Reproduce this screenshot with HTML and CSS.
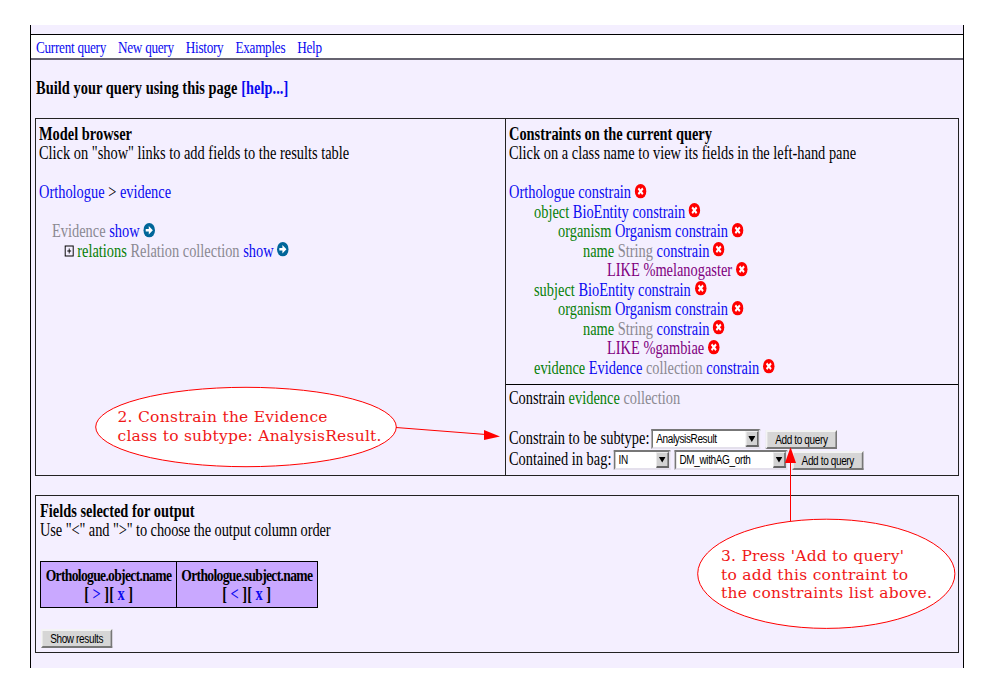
FILE: index.html
```html
<!DOCTYPE html>
<html lang="en">
<head>
<meta charset="utf-8">
<title>Query builder</title>
<link rel="stylesheet" href="styles.css">
</head>
<body>
<svg class="defs" width="0" height="0">
  <symbol id="remove" viewBox="0 0 14 14"><circle cx="7" cy="7" r="7" fill="#f00"/><path d="M4.3 4.3 9.7 9.7M9.7 4.3 4.3 9.7" stroke="#fff" stroke-width="2.3"/></symbol>
  <symbol id="go" viewBox="0 0 14 14"><circle cx="7" cy="7" r="7" fill="#069"/><path d="M2.8 5.7H6.5V2.9L11.4 7 6.5 11.1V8.3H2.8Z" fill="#fff"/></symbol>
  <symbol id="plus" viewBox="0 0 12 12"><path d="M1 1H11V11H1Z" fill="none" stroke="#000" stroke-width="1.2"/><path d="M3.6 6H8.4M6 3.6V8.4" stroke="#000" stroke-width="1.1"/></symbol>
</svg>
<div class="page">
  <nav class="nav"><div class="row"><a>Current query</a><a>New query</a><a>History</a><a>Examples</a><a>Help</a></div></nav>
  <h1 class="row heading">Build your query using this page <a>[help...]</a></h1>

  <div class="panes">
    <section class="browser">
      <h2 class="row">Model browser</h2>
      <p class="row">Click on "show" links to add fields to the results table</p>
      <p class="row gap"><a>Orthologue</a> &gt; <a>evidence</a></p>
      <p class="row gap in1"><span class="type">Evidence</span> <a>show</a> <svg class="icon"><use href="#go"/></svg></p>
      <p class="row in2"><svg class="icon plus"><use href="#plus"/></svg> <span class="field">relations</span> <span class="type">Relation collection</span> <a>show</a> <svg class="icon"><use href="#go"/></svg></p>
    </section>
    <div class="right">
      <section class="constraints">
        <h2 class="row">Constraints on the current query</h2>
        <p class="row">Click on a class name to view its fields in the left-hand pane</p>
        <p class="row gap"><a>Orthologue</a> <a>constrain</a> <svg class="icon"><use href="#remove"/></svg></p>
        <p class="row d1"><span class="field">object</span> <a>BioEntity</a> <a>constrain</a> <svg class="icon"><use href="#remove"/></svg></p>
        <p class="row d2"><span class="field">organism</span> <a>Organism</a> <a>constrain</a> <svg class="icon"><use href="#remove"/></svg></p>
        <p class="row d3"><span class="field">name</span> <span class="type">String</span> <a>constrain</a> <svg class="icon"><use href="#remove"/></svg></p>
        <p class="row d4"><span class="value">LIKE %melanogaster</span> <svg class="icon"><use href="#remove"/></svg></p>
        <p class="row d1"><span class="field">subject</span> <a>BioEntity</a> <a>constrain</a> <svg class="icon"><use href="#remove"/></svg></p>
        <p class="row d2"><span class="field">organism</span> <a>Organism</a> <a>constrain</a> <svg class="icon"><use href="#remove"/></svg></p>
        <p class="row d3"><span class="field">name</span> <span class="type">String</span> <a>constrain</a> <svg class="icon"><use href="#remove"/></svg></p>
        <p class="row d4"><span class="value">LIKE %gambiae</span> <svg class="icon"><use href="#remove"/></svg></p>
        <p class="row d1"><span class="field">evidence</span> <a>Evidence</a> <span class="type">collection</span> <a>constrain</a> <svg class="icon"><use href="#remove"/></svg></p>
      </section>
      <section class="editor">
        <p class="row">Constrain <span class="field">evidence</span> <span class="type">collection</span></p>
        <div class="row form first"><span class="label subtype">Constrain to be subtype:</span><span class="select s1">AnalysisResult<i class="drop"></i></span><span class="button">Add to query</span></div>
        <div class="row form"><span class="label bag">Contained in bag:</span><span class="select s2">IN<i class="drop"></i></span><span class="select s3">DM_withAG_orth<i class="drop"></i></span><span class="button">Add to query</span></div>
      </section>
    </div>
  </div>

  <section class="output">
    <h2 class="row">Fields selected for output</h2>
    <p class="row order">Use "&lt;" and "&gt;" to choose the output column order</p>
    <div class="columns">
      <div class="column c1"><span class="name">Orthologue.object.name</span><span class="links">[ <a>&gt;</a> ][ <a>x</a> ]</span></div>
      <div class="column c2"><span class="name">Orthologue.subject.name</span><span class="links">[ <a>&lt;</a> ][ <a>x</a> ]</span></div>
    </div>
    <div class="row form results"><span class="button">Show results</span></div>
  </section>
</div>

<svg class="notes" width="994" height="688" viewBox="0 0 994 688">
  <g class="shape">
    <ellipse cx="246" cy="427" rx="150.3" ry="39.7"/>
    <path d="M396 427.5 486 434.5"/>
    <ellipse cx="826.3" cy="573.8" rx="128.6" ry="54.6"/>
    <path d="M790.5 521V460"/>
  </g>
  <path class="head" d="M484 430 500 436.500 484 440ZM785 463 790.5 447 796 463Z"/>
  <g class="note">
    <text x="117.500" y="421.500" textLength="210">2. Constrain the Evidence</text>
    <text x="117.500" y="440.500" textLength="264">class to subtype: AnalysisResult.</text>
    <text x="721" y="560.500" textLength="183">3. Press 'Add to query'</text>
    <text x="721" y="579.500" textLength="187">to add this contraint to</text>
    <text x="721" y="597.500" textLength="211">the constraints list above.</text>
  </g>
</svg>
</body>
</html>
```

FILE: styles.css
```css
* { box-sizing: border-box; }
body {
  margin: 0;
  width: 994px;
  height: 688px;
  position: relative;
  overflow: hidden;
  padding: 25px 0 0 30px;
  background: #fff;
  color: #000;
  font: 18px/19.5px "Liberation Serif", serif;
}
.defs { position: absolute; }
h1, h2, p { margin: 0; font-size: inherit; font-weight: normal; }
h1, h2 { font-weight: bold; }
a { color: #0a0af0; }
.page {
  width: 934px;
  height: 643px;
  background: #f4efff;
  border: solid #000;
  border-width: 0 1px;
  padding-top: 9px;
}
/* Condensed text line */
.row {
  width: max-content;
  transform: scaleX(.8);
  transform-origin: 0 0;
  white-space: nowrap;
  height: 19.5px;
}
.nav {
  height: 26px;
  background: #fff;
  border-top: 1px solid #000;
  border-bottom: 2px solid #666370;
  padding: 3px 0 0 5px;
  font-size: 16.5px;
}
.nav .row { display: flex; gap: 15px; letter-spacing: -.35px; }
.heading { margin: 19px 0 0 5px; letter-spacing: .05px; }
.panes {
  display: grid;
  grid-template-columns: 470px 1fr;
  width: 924px;
  height: 358px;
  margin: 19.5px 0 0 4px;
  border: 1px solid #222;
}
.browser { padding: 5.5px 0 0 3px; border-right: 1px solid #222; }
.right { display: grid; grid-template-rows: 266px 1fr; }
.constraints { padding: 5.5px 0 0 3px; border-bottom: 1px solid #000; }
.editor { padding: 4px 0 0 3px; }
.gap { margin-top: 19.5px; }
.in1 { margin-left: 12.5px; }
.in2 { margin-left: 24.5px; }
.d1 { margin-left: 24.5px; }
.d2 { margin-left: 49px; }
.d3 { margin-left: 73.5px; }
.d4 { margin-left: 98px; }
.field { color: #088008; }
.type { color: #8b8992; }
.value { color: #800080; }
.icon { width: 15px; height: 14.5px; overflow: visible; }
.plus { width: 13px; height: 12px; margin-right: -1px; }

.form { display: flex; height: 20.5px; }
.first { margin-top: 20.5px; }
.label { line-height: 19px; }
.subtype { width: 178px; }
.bag { width: 131px; }
.select, .button { font: 12.5px/16px "Liberation Sans", sans-serif; letter-spacing: -.45px; }
.select {
  display: flex;
  justify-content: space-between;
  height: 20px;
  background: #fff;
  border: 2px solid;
  border-color: #777 #e4e0ec #e4e0ec #777;
  padding-left: 4px;
}
.s1 { width: 136px; margin-right: 7px; }
.s2 { width: 71px; margin-right: 5px; }
.s3 { width: 141px; margin-right: 6px; }
.drop {
  width: 16px;
  height: 16px;
  background: #d2d2d2;
  border: 1px solid;
  border-color: #eee #666 #666 #eee;
  border-width: 1px 2px 2px 1px;
  padding: 4px 0 0 2px;
}
.drop::before {
  content: "";
  display: block;
  width: 9px;
  height: 6px;
  background: #000;
  clip-path: polygon(0 0, 100% 0, 50% 100%);
}
.button {
  width: 89px;
  height: 19px;
  margin-top: 1px;
  background: #d6d6d6;
  border: 2px solid;
  border-color: #f4f4f4 #777 #777 #f4f4f4;
  text-align: center;
}
.output {
  width: 924px;
  height: 158px;
  margin: 19px 0 0 4px;
  padding: 5.5px 0 0 4px;
  border: 1px solid #222;
}
.order { letter-spacing: -.1px; }
.columns {
  display: grid;
  grid-template-columns: 136px 1fr;
  width: 278px;
  height: 47px;
  margin-top: 20px;
  border: 1px solid #000;
  background: #c9a8ff;
  font-weight: bold;
}
.column {
  display: flex;
  flex-direction: column;
  align-items: center;
  padding-top: 4px;
}
.c1 { border-right: 1px solid #000; }
.name, .links { transform: scaleX(.8); white-space: nowrap; }
.name { font-size: 17px; letter-spacing: -.85px; margin: 0 -30px; }
.results { margin: 20px 0 0 1px; }

/* Callouts drawn above the page */
.notes { position: absolute; left: 0; top: 0; }
.shape { fill: #fff; stroke: #f00; stroke-width: 1; }
.head { fill: #f00; }
.note { fill: #f01818; font: 15.5px "DejaVu Serif", serif; }
```
